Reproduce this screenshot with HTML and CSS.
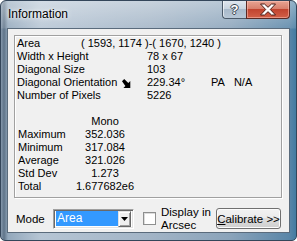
FILE: index.html
```html
<!DOCTYPE html>
<html>
<head>
<meta charset="utf-8">
<link rel="stylesheet" href="styles.css">
</head>
<body>
<div class="window">
  <div class="titlebar">
    <div class="title">Information</div>
    <div class="caption-buttons">
      <div class="cbtn help">?</div>
      <div class="cbtn close">
        <svg width="18" height="13" viewBox="0 0 18 13"><path d="M1.5 1 H5.5 L9 4.3 L12.5 1 H16.5 L11.3 6.5 L16.5 12 H12.5 L9 8.7 L5.5 12 H1.5 L6.7 6.5 Z" fill="#fff" stroke="#4b1b14" stroke-width="1" stroke-linejoin="round"/></svg>
      </div>
    </div>
  </div>
  <div class="client">
    <div class="group">
      <div class="info">
        <div class="c1">Area</div><div class="span-val">( 1593, 1174 )-( 1670, 1240 )</div>
        <div class="lab">Width x Height</div><div class="val">78 x 67</div>
        <div class="lab">Diagonal Size</div><div class="val">103</div>
        <div class="lab">Diagonal Orientation <svg class="arrow" width="10" height="9" viewBox="0 0 10 9"><path d="M0 2.2 L2.2 0 L6.3 4.1 L8.3 2.1 V9 H1.4 L3.4 7 Z" fill="#000"/></svg></div><div class="val">229.34°<span class="pa">PA</span><span class="na">N/A</span></div>
        <div class="lab">Number of Pixels</div><div class="val">5226</div>
      </div>
      <div class="stats">
        <div></div><div class="sv">Mono</div>
        <div>Maximum</div><div class="sv">352.036</div>
        <div>Minimum</div><div class="sv">317.084</div>
        <div>Average</div><div class="sv">321.026</div>
        <div>Std Dev</div><div class="sv">1.273</div>
        <div>Total</div><div class="sv">1.677682e6</div>
      </div>
    </div>
    <div class="footer">
      <div class="mode">Mode</div>
      <div class="combo">
        <div class="combo-text"><span class="sel">Area</span></div>
        <div class="combo-btn"><svg width="7" height="4" viewBox="0 0 7 4"><path d="M0 0 H7 L3.5 4 Z" fill="#000"/></svg></div>
      </div>
      <div class="check"></div>
      <div class="check-label">Display in<br>Arcsec</div>
      <div class="button"><span class="u">C</span>alibrate &gt;&gt;</div>
    </div>
  </div>
</div>
</body>
</html>
```
FILE: styles.css
```css
html, body {
  margin: 0;
  padding: 0;
  width: 297px;
  height: 241px;
  overflow: hidden;
  background: #fff;
}
.window {
  box-sizing: border-box;
  width: 297px;
  height: 241px;
  border: 1px solid #34465a;
  border-radius: 6px 6px 5px 5px;
  padding: 0 6px 7px 6px;
  display: flex;
  flex-direction: column;
  background:
    linear-gradient(to bottom, rgba(255,255,255,0.4) 0px, rgba(255,255,255,0.12) 27px, rgba(255,255,255,0) 28px),
    linear-gradient(to right, #8598ac 0px, #5f7489 3px, #93a8bc 7px, #b6c5d4 40px, #a2b4c6 150px, #8aa3ba 230px, #5a86a8 288px, #3c78a0 297px);
  font-family: "Liberation Sans", Arial, sans-serif;
  font-size: 11px;
  color: #000;
}
.titlebar {
  height: 27px;
  display: flex;
  justify-content: space-between;
  align-items: flex-start;
}
.title {
  font-size: 12px;
  margin: 6px 0 0 1px;
  color: #000;
  text-shadow: 0 0 6px rgba(255,255,255,0.9), 0 0 3px rgba(255,255,255,0.9);
}
.caption-buttons {
  display: flex;
}
.cbtn {
  box-sizing: border-box;
  height: 18px;
  border: 1px solid #4b5a6a;
  border-top: none;
  display: flex;
  align-items: center;
  justify-content: center;
}
.help {
  width: 24px;
  border-radius: 0 0 0 4px;
  border-right: none;
  background: linear-gradient(to bottom, #dfe6ee 0%, #c8d4e0 45%, #a9bacb 50%, #b7c7d6 100%);
  color: #fff;
  font-weight: bold;
  font-size: 13px;
  text-shadow: 1px 0 0 #3a4550, -1px 0 0 #3a4550, 0 1px 0 #3a4550, 0 -1px 0 #3a4550;
  box-shadow: inset 1px 0 0 rgba(255,255,255,0.6);
}
.close {
  width: 44px;
  border-radius: 0 0 4px 0;
  border-color: #5a2a24;
  background: linear-gradient(to bottom, #e8a493 0%, #d8806d 45%, #c2442f 50%, #d26048 100%);
  box-shadow: inset 0 0 0 1px rgba(255,200,190,0.5);
}
.close svg { display: block; }
.client {
  flex: 1;
  border: 1px solid #5a6b7c;
  background: #f0f0f0;
  display: flex;
  flex-direction: column;
}
.group {
  margin: 6px 7px 0 6px;
  height: 160px;
  border: 1px solid #a0a0a0;
  box-shadow: inset 1px 1px 0 #fff, 1px 1px 0 #fff;
  padding: 1px 0 0 2px;
  line-height: 13px;
}
.info {
  display: grid;
  grid-template-columns: 64px 66px 1fr;
}
.c1 { grid-column: 1; }
.span-val { grid-column: 2 / 4; }
.lab { grid-column: 1 / 3; display: flex; align-items: center; }
.val { grid-column: 3; }
.arrow { margin-left: 5px; margin-top: 1px; }
.pa { margin-left: 26px; }
.na { margin-left: 9px; }
.stats {
  margin-top: 13px;
  display: grid;
  grid-template-columns: 57px 60px;
  padding-left: 1px;
}
.sv { text-align: center; }
.footer {
  margin-top: 10px;
  height: 21px;
  display: flex;
  align-items: center;
  padding: 0 8px 0 8px;
}
.mode { width: 37px; font-size: 11.5px; }
.combo {
  box-sizing: border-box;
  width: 81px;
  height: 20px;
  border: 1px solid;
  border-color: #a0a0a0 #fff #fff #a0a0a0;
  background: #fff;
  display: flex;
  align-items: center;
  box-shadow: inset 1px 1px 0 #696969, inset -1px -1px 0 #e3e3e3;
  padding: 1px 2px 1px 2px;
}
.combo-text {
  flex: 1;
  height: 16px;
  display: flex;
  align-items: center;
}
.sel {
  display: block;
  width: 62px;
  height: 15px;
  line-height: 15px;
  background: #3399ff;
  color: #fff;
  font-size: 12px;
  padding-left: 1px;
  box-sizing: border-box;
}
.combo-btn {
  box-sizing: border-box;
  width: 15px;
  height: 16px;
  background: #f0f0f0;
  border: 1px solid;
  border-color: #e3e3e3 #696969 #696969 #e3e3e3;
  box-shadow: inset 1px 1px 0 #fff, inset -1px -1px 0 #a0a0a0;
  display: flex;
  align-items: center;
  justify-content: center;
}
.combo-btn svg { display: block; }
.check {
  box-sizing: border-box;
  width: 13px;
  height: 13px;
  margin-left: 9px;
  background: #fff;
  border: 1px solid #8e8f8f;
  box-shadow: inset 1px 1px 0 #dcdcdc;
}
.check-label {
  margin-left: 5px;
  font-size: 11.5px;
  line-height: 13px;
}
.button {
  margin-left: auto;
  box-sizing: border-box;
  width: 65px;
  height: 21px;
  border: 1px solid #707070;
  border-radius: 3px;
  background: linear-gradient(to bottom, #f2f2f2 0%, #ebebeb 49%, #dddddd 50%, #cfcfcf 100%);
  box-shadow: inset 0 0 0 1px #fcfcfc;
  display: flex;
  align-items: center;
  justify-content: center;
  font-size: 11.5px;
}
.u { text-decoration: underline; }
```
